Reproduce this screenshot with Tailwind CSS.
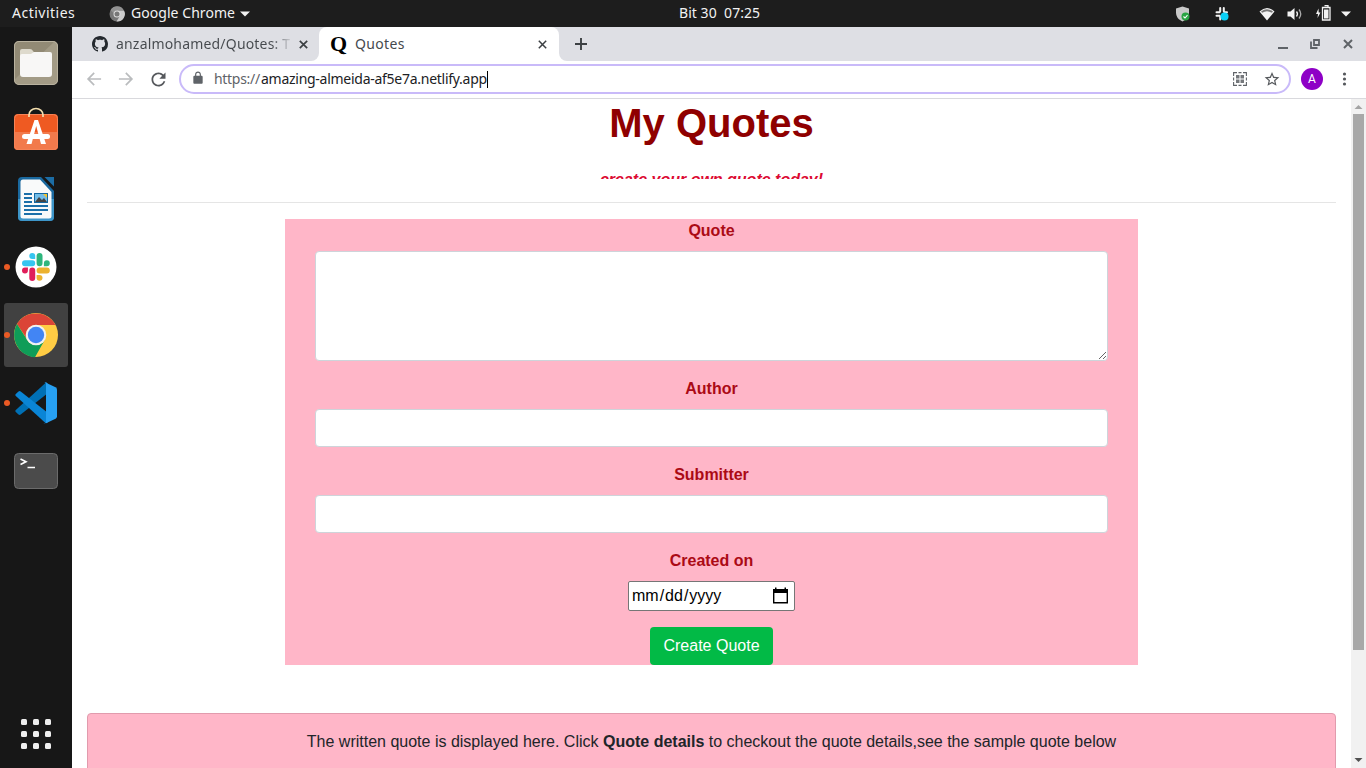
<!DOCTYPE html>
<html lang="en">
<head>
<meta charset="utf-8">
<title>Quotes</title>
<script src="https://cdn.jsdelivr.net/npm/@tailwindcss/browser@4"></script>
</head>
<body class="w-[1366px] h-[768px] overflow-hidden flex flex-col bg-[#171717] font-['Noto_Sans',sans-serif]">

<!-- Desktop top bar -->
<header class="h-[27px] shrink-0 bg-[#1d1d1d] text-[#f2f2f2] text-[14px] leading-[25px] flex items-center whitespace-nowrap">
  <div class="w-[109px] pl-3 pb-0.5 tracking-[0.5px]">Activities</div>
  <svg class="w-4 h-4 shrink-0" viewBox="0 0 16 16"><circle cx="8" cy="8" r="7.5" fill="#777"/><path d="M8 4.500H15a7.500 7.500 0 0 1-7.500 11L11 9.700z" fill="#ccc"/><path d="M1.500 4.300A7.500 7.500 0 0 1 15 4.500H8a3.500 3.500 0 0 0-3.400 2.500z" fill="#929292"/><circle cx="8" cy="8" r="3.500" fill="#ddd"/><circle cx="8" cy="8" r="2.500" fill="#777"/></svg>
  <div class="w-[109px] pl-1.5 pb-0.5 tracking-[0.05px]">Google Chrome</div>
  <svg class="w-[10px] h-[6px] ml-[6px]" viewBox="0 0 10 6"><path d="M0 0.500h10L5 5.500z" fill="#f2f2f2"/></svg>
  <div class="ml-[429px] w-[82px] pb-0.5 whitespace-pre tracking-[0.05px]">Bit 30  07:25</div>
  <div class="ml-auto flex items-center h-full pr-[15px]">
    <svg class="w-4 h-4 mr-[23px]" viewBox="0 0 16 16"><path d="M7.500 0.500 1 2.500v4C1 11 4 14 7.500 15.500 11 14 14 11 14 6.500v-4z" fill="#c9c9c9"/><circle cx="10.500" cy="10.500" r="4" fill="#2aa443"/><path d="m8.500 10.500 1.500 1.500 2.500-2.800" fill="none" stroke="#fff" stroke-width="1.100"/></svg>
    <svg class="w-4 h-4 mr-[29px]" viewBox="0 0 16 16"><g stroke="#f2f2f2" stroke-width="2" stroke-linecap="round"><path d="M6.200 2v3.200M9.800 2v3.200M2.500 6.300h3.200M10.300 6.300H13M2.500 9.700h3.200M6.200 10.500v3"/></g><circle cx="10.500" cy="10.500" r="4" fill="#0ad0f7"/></svg>
    <svg class="w-4 h-[14px] mr-[12px]" viewBox="0 0 16 14"><path d="M8 13.500 0.500 4.500Q8-2.500 15.500 4.500z" fill="#f2f2f2"/><path d="M2 4.500Q8 0 14 4.500L12.800 5.800Q8 2.500 3.200 5.800z" fill="#777"/></svg>
    <svg class="w-4 h-[14px] mr-[12px]" viewBox="0 0 16 14"><path d="M0.500 4.500h3L7.500 1v12L3.500 9.500h-3z" fill="#f2f2f2"/><path d="M9.500 4.500q2 2.500 0 5" stroke="#f2f2f2" stroke-width="1.300" fill="none"/><path d="M12 2.500q3.500 4.500 0 9" stroke="#aaa" stroke-width="1.300" fill="none"/></svg>
    <svg class="w-4 h-4 mr-[10px] -translate-y-px" viewBox="0 0 16 16"><path d="M3.500 3.500 1 9h2L2.500 13l3-5.500H3.700z" fill="#f2f2f2"/><path d="M7.500 2.500H15v12.500H7.500zM9.500 0.500H13v2" fill="none" stroke="#f2f2f2" stroke-width="1.300"/><path d="M9 4.500h4.500v9H9z" fill="#f2f2f2"/></svg>
    <svg class="w-[10px] h-[6px]" viewBox="0 0 10 6"><path d="M0 0.500h10L5 5.500z" fill="#f2f2f2"/></svg>
  </div>
</header>

<div class="flex flex-1 min-h-0">
  <!-- Dock -->
  <nav class="w-[72px] shrink-0 bg-[#171717] flex flex-col items-center pt-1 gap-1">
    <div class="w-16 h-16 grid place-items-center">
      <svg class="w-[46px] h-[46px]" viewBox="0 0 46 46"><rect x="1" y="1" width="44" height="44" rx="5" fill="#a39b86"/><path d="M1 40V6a5 5 0 0 1 5-5h36z" fill="#928a75"/><rect x="1.500" y="1.500" width="43" height="43" rx="4.500" fill="none" stroke="#b9b29f"/><path d="M7 14v-3q0-2 2-2h8q2 0 3 2l1.500 2H30v6H7z" fill="#dedacd"/><path d="M7 16q0-2 2-2h9l3-2h16q2 0 2 2v20q0 3-3 3H10q-3 0-3-3z" fill="#f8f7f6"/></svg>
    </div>
    <div class="w-16 h-16 grid place-items-center pb-1">
      <svg class="w-[46px] h-[46px]" viewBox="0 0 46 46"><rect x="1" y="8" width="44" height="36" rx="4" fill="#ef5a22"/><path d="M1 26h44v14a4 4 0 0 1-4 4H5a4 4 0 0 1-4-4z" fill="#f27a4c"/><rect x="1.500" y="8.500" width="43" height="35" rx="4" fill="none" stroke="#f68357"/><path d="M16 11V9a7 6.500 0 0 1 14 0v2" stroke="#f5dfae" stroke-width="1.700" fill="none"/><path d="M13.500 38 21.500 14h3.500L33 38h-5L23.200 20 18.500 38z" fill="#fff"/><rect x="9" y="28" width="28" height="5" rx="2.500" fill="#fff"/></svg>
    </div>
    <div class="w-16 h-16 grid place-items-center">
      <svg class="w-[38px] h-[46px]" viewBox="0 0 38 46"><path d="M5 1h19l13 14v26q0 4-4 4H5q-4 0-4-4V5q0-4 4-4z" fill="#1a699f"/><path d="M1 23h36v18q0 4-4 4H5q-4 0-4-4z" fill="#3d95c8"/><path d="M6 3.500h17L34.500 16v24q0 2.500-2.500 2.500H6q-2.500 0-2.500-2.500V6Q3.500 3.500 6 3.500z" fill="#f9fafa"/><path d="M27.500 1H37v9.500z" fill="#1c6da5"/><path d="M7 18h8M7 22h8M7 26h8M7 30h24M7 34h24M7 38h18" stroke="#1b6fa9" stroke-width="2"/><rect x="17" y="17" width="14" height="10" fill="#1467a0"/><rect x="18" y="18" width="12" height="8" fill="#73bde8"/><path d="M26 18h4v4z" fill="#f4c430"/><path d="m18 26 4-5 3 3 2-2 3 4z" fill="#444"/></svg>
    </div>
    <div class="w-16 h-16 grid place-items-center relative">
      <i class="absolute left-0 top-[29px] w-1.5 h-1.5 rounded-full bg-[#ea5a24]"></i>
      <svg class="w-[42px] h-[42px]" viewBox="0 0 42 42"><circle cx="21" cy="21" r="20.500" fill="#fff"/><g transform="translate(7 7) scale(.228)"><path d="M26 77a13 13 0 1 1-13-13h13zM32 77a13 13 0 0 1 26 0v33a13 13 0 0 1-26 0z" fill="#e01e5a"/><path d="M45 26a13 13 0 1 1 13-13v13zM45 32a13 13 0 0 1 0 26H13a13 13 0 0 1 0-26z" fill="#36c5f0"/><path d="M96 45a13 13 0 1 1 13 13H96zM90 45a13 13 0 0 1-26 0V13a13 13 0 0 1 26 0z" fill="#2eb67d"/><path d="M77 96a13 13 0 1 1-13 13V96zM77 90a13 13 0 0 1 0-26h32a13 13 0 0 1 0 26z" fill="#ecb22e"/></g></svg>
    </div>
    <div class="w-16 h-16 grid place-items-center relative bg-[#414141] rounded-[3px]">
      <i class="absolute left-0 top-[29px] w-1.5 h-1.5 rounded-full bg-[#ea5a24]"></i>
      <svg class="w-[46px] h-[46px]" viewBox="0 0 46 46"><circle cx="23" cy="23" r="22" fill="#fc4"/><path d="M4 12A22.300 22.300 0 0 1 42.500 13H23a10 10 0 0 0-9 14z" fill="#db4437"/><path d="M4 12A22.300 22.300 0 0 0 22 45.200L31.700 28A10 10 0 0 1 14.300 28z" fill="#0f9d58"/><circle cx="23" cy="23" r="10.300" fill="#f1f1f1"/><circle cx="23" cy="23" r="8.200" fill="#4285f4"/></svg>
    </div>
    <div class="w-16 h-16 grid place-items-center relative">
      <i class="absolute left-0 top-[29px] w-1.5 h-1.5 rounded-full bg-[#ea5a24]"></i>
      <svg class="w-[42px] h-[42px]" viewBox="0 0 42 42"><path d="M31 0.500 0.800 28q-1 1 0 2l2.700 2.600q1 .8 2.200 0L33 11z" fill="#0070b5"/><path d="M31 41.500 0.800 14q-1-1 0-2l2.700-2.600q1-.8 2.200 0L33 31z" fill="#0a85d6"/><path d="m31 41.300 9.500-4.500q1.500-.8 1.500-2.500V7.700q0-1.700-1.500-2.500L31 .7v40.600z" fill="#27a0f2"/><path d="M28.500 41Q31 42 31.500 39V3Q31 0 28.500 1L31 .3l1.500 1v39.500z" fill="#27a0f2"/></svg>
    </div>
    <div class="w-16 h-16 grid place-items-center">
      <svg class="w-11 h-9" viewBox="0 0 44 36"><rect x=".5" y=".5" width="43" height="35" rx="4" fill="#4b4b4b" stroke="#6b6b6b"/><path d="m6.500 6 5.500 2.700L6.500 11.500M13.500 14.500h7.500" fill="none" stroke="#fff" stroke-width="1.600"/></svg>
    </div>
    <div class="mt-auto mb-[19px] grid grid-cols-3 gap-1.5">
      <i class="w-1.5 h-1.5 rounded-[1.500px] bg-[#eee]"></i><i class="w-1.5 h-1.5 rounded-[1.500px] bg-[#eee]"></i><i class="w-1.5 h-1.5 rounded-[1.500px] bg-[#eee]"></i>
      <i class="w-1.5 h-1.5 rounded-[1.500px] bg-[#eee]"></i><i class="w-1.5 h-1.5 rounded-[1.500px] bg-[#eee]"></i><i class="w-1.5 h-1.5 rounded-[1.500px] bg-[#eee]"></i>
      <i class="w-1.5 h-1.5 rounded-[1.500px] bg-[#eee]"></i><i class="w-1.5 h-1.5 rounded-[1.500px] bg-[#eee]"></i><i class="w-1.5 h-1.5 rounded-[1.500px] bg-[#eee]"></i>
    </div>
  </nav>

  <!-- Browser window -->
  <section class="flex-1 min-w-0 flex flex-col bg-white">
    <!-- Tab strip -->
    <div class="h-[34px] shrink-0 bg-white flex text-[14px] text-[#45494d] whitespace-nowrap">
      <div class="w-[247px] bg-[#dedfe4] rounded-br-[8px] flex items-center pl-5">
        <svg class="w-4 h-4 shrink-0" viewBox="0 0 16 16"><path fill="#24292e" d="M8 0C3.580 0 0 3.580 0 8c0 3.540 2.290 6.530 5.470 7.590.4.070.55-.17.55-.38 0-.19-.01-.82-.01-1.490-2.010.37-2.530-.49-2.690-.94-.09-.23-.48-.94-.82-1.130-.28-.15-.68-.52-.01-.53.63-.01 1.080.58 1.230.82.72 1.210 1.870.87 2.330.66.070-.52.28-.87.51-1.070-1.780-.2-3.640-.89-3.640-3.950 0-.87.31-1.590.82-2.150-.08-.2-.36-1.020.08-2.120 0 0 .67-.21 2.200.82.64-.18 1.320-.27 2-.27s1.360.09 2 .27c1.530-1.040 2.200-.82 2.200-.82.44 1.100.16 1.920.08 2.120.51.56.82 1.270.82 2.150 0 3.070-1.870 3.750-3.650 3.950.29.25.54.73.54 1.480 0 1.070-.01 1.930-.01 2.200 0 .21.15.46.55.38A8.010 8.010 0 0 0 16 8c0-4.420-3.580-8-8-8z"/></svg>
        <div class="w-[177px] ml-2 mb-0.5 overflow-hidden bg-linear-to-r from-[#45494d] from-88% to-[#45494d]/0 bg-clip-text text-transparent tracking-[0.18px]">anzalmohamed/Quotes: T</div>
        <svg class="w-[9px] h-[9px] ml-[6px]" viewBox="0 0 9 9"><path d="m.8.8 7.400 7.400M8.200.8.8 8.200" stroke="#3c4043" stroke-width="1.700"/></svg>
      </div>
      <div class="w-[240px] bg-[#dedfe4] flex">
        <div class="flex-1 flex items-center pl-[11px] bg-white rounded-t-[8px]">
          <span class="w-[17px] mb-px font-['Liberation_Serif',serif] font-bold text-[22px] leading-none text-black">Q</span>
          <span class="ml-2 mb-0.5 tracking-[0.35px]">Quotes</span>
          <svg class="w-[9px] h-[9px] ml-auto mr-[12px]" viewBox="0 0 9 9"><path d="m.8.8 7.400 7.400M8.200.8.8 8.200" stroke="#3c4043" stroke-width="1.500"/></svg>
        </div>
      </div>
      <div class="flex-1 bg-[#dedfe4] rounded-bl-[8px] flex items-center pl-4 pr-[13px]">
        <svg class="w-3 h-3" viewBox="0 0 12 12"><path d="M6 0v12M0 6h12" stroke="#3c4043" stroke-width="1.900"/></svg>
        <svg class="w-[10px] h-[10px] ml-auto mr-[22px]" viewBox="0 0 10 10"><path d="M0 9h10" stroke="#5f6368" stroke-width="2"/></svg>
        <svg class="w-[10px] h-[10px] mr-[23px]" viewBox="0 0 10 10"><path d="M4 1h5v5H4zM1 2.500V9h6.500" fill="none" stroke="#5f6368" stroke-width="1.800"/></svg>
        <svg class="w-[10px] h-[10px]" viewBox="0 0 10 10"><path d="m1 1 8 8M9 1 1 9" stroke="#5f6368" stroke-width="2"/></svg>
      </div>
    </div>

    <!-- Toolbar -->
    <div class="h-[38px] shrink-0 border-b border-[#d9d9dd] flex items-center pl-3 pr-3 pb-px">
      <svg class="w-5 h-5" viewBox="0 0 24 24"><path fill="#babcbe" d="M20.500 11H7.330l5.590-5.590L11.500 4l-8 8 8 8 1.410-1.410L7.330 13H20.500v-2z"/></svg>
      <svg class="w-5 h-5 ml-3" viewBox="0 0 24 24"><path fill="#babcbe" d="M3.500 13h13.170l-5.590 5.590L12.500 20l8-8-8-8-1.410 1.410L16.670 11H3.500z"/></svg>
      <svg class="w-[21px] h-[21px] ml-[12px]" viewBox="0 0 24 24"><path fill="#55585c" d="M17.650 6.350C16.200 4.900 14.210 4 12 4c-4.420 0-7.990 3.580-7.990 8s3.570 8 7.990 8c3.730 0 6.840-2.550 7.730-6h-2.080c-.82 2.330-3.040 4-5.650 4-3.310 0-6-2.690-6-6s2.690-6 6-6c1.660 0 3.140.69 4.220 1.780L13 11h7V4l-2.350 2.350z"/></svg>
      <div class="ml-[10px] w-[1112px] h-[30px] border-2 border-[#c9baf9] rounded-full flex items-center pl-[10px] pr-[9px] text-[14px] whitespace-nowrap">
        <svg class="w-[14px] h-[14px] -translate-y-px" viewBox="0 0 24 24"><path fill="#5f6368" d="M18 8h-1V6c0-2.760-2.240-5-5-5S7 3.240 7 6v2H6c-1.100 0-2 .9-2 2v10c0 1.100.9 2 2 2h12c1.100 0 2-.9 2-2V10c0-1.100-.9-2-2-2zM9 8V6c0-1.660 1.340-3 3-3s3 1.340 3 3v2z"/></svg>
        <span class="ml-[9px] mb-0.5 w-[47px] text-[#5f6368] tracking-[-0.3px]">https://</span><span class="mb-0.5 w-[226px] text-[#202124] tracking-[-0.27px]">amazing-almeida-af5e7a.netlify.app</span><i class="w-px h-[17px] bg-black"></i>
        <svg class="w-[14px] h-[14px] ml-auto mr-[17px]" viewBox="0 0 14 14"><path d="M.6 4V.6H4M10 .6h3.400V4M13.400 10v3.400H10M4 13.400H.6V10M5.500.6h3M5.500 13.400h3M.6 5.500v3M13.400 5.500v3" fill="none" stroke="#5f6368" stroke-width="1.100"/><path d="M3 3h3.500v3.500H3zM7.500 3H11v3.500H7.500zM3 7.500h3.500V11H3zM7.500 7.500H11V11H7.500z" fill="#75787c"/></svg>
        <svg class="w-4 h-4" viewBox="0 0 24 24"><path fill="#55585c" d="m22 9.240-7.190-.62L12 2 9.190 8.630 2 9.240l5.460 4.730L5.820 21 12 17.270 18.180 21l-1.630-7.030L22 9.240zM12 15.400l-3.760 2.270 1-4.280-3.320-2.880 4.380-.38L12 6.100l1.710 4.040 4.380.38-3.320 2.880 1 4.280L12 15.400z" transform="translate(-1.200 -.8) scale(1.100)"/></svg>
      </div>
      <div class="ml-[10px] w-[22px] h-[22px] rounded-full bg-[#8e00c6] text-white text-[12px] font-[Roboto,sans-serif] grid place-items-center leading-none">A</div>
      <svg class="w-4 h-4 ml-[13px]" viewBox="0 0 16 16"><g fill="#55585c"><circle cx="8.500" cy="3" r="1.600"/><circle cx="8.500" cy="8" r="1.600"/><circle cx="8.500" cy="13" r="1.600"/></g></svg>
    </div>

    <!-- Page -->
    <div class="flex-1 min-h-0 flex font-['Liberation_Sans',Arial,sans-serif] text-base text-center">
      <main class="w-[1279px] px-[15px] overflow-hidden flex flex-col">
        <h1 class="text-[40px] leading-[48px] font-bold text-[#8f0000] shrink-0">My Quotes</h1>
        <div class="mt-5 h-3 shrink-0 overflow-hidden leading-[26px] font-bold italic text-[#dc0a32]">create your own quote today!</div>
        <hr class="mt-[23px] border-0 h-px shrink-0 bg-[#e5e5e5]">
        <form class="mt-4 w-[853px] h-[446px] shrink-0 self-center bg-[#ffb6c8] px-[30px] flex flex-col items-center font-bold text-[#ab0a15] leading-6">
          <label>Quote</label>
          <textarea class="mt-2 w-full h-[110px] shrink-0 bg-white border border-[#ced4da] rounded-[4px] resize-y block"></textarea>
          <label class="mt-4">Author</label>
          <input class="mt-2 w-full h-[38px] bg-white border border-[#ced4da] rounded-[4px]">
          <label class="mt-4">Submitter</label>
          <input class="mt-2 w-full h-[38px] bg-white border border-[#ced4da] rounded-[4px]">
          <label class="mt-4">Created on</label>
          <div class="mt-2 w-[167px] h-[30px] bg-white border border-[#767676] rounded-[2px] flex items-center justify-between pl-[3px] pr-[5px] font-normal text-black">
            <span class="flex gap-px"><span>mm</span><span>/</span><span>dd</span><span>/</span><span>yyyy</span></span>
            <svg class="w-[17px] h-[17px] -translate-y-px" viewBox="0 0 17 17"><path d="M1.700 3.500h13.600v12.300H1.700z" fill="none" stroke="#000" stroke-width="1.400"/><path d="M1 2h15v4H1zM3 0.500h1.500V3H3zM12.500 0.500H14V3h-1.500z"/></svg>
          </div>
          <button type="button" class="mt-4 w-[123px] h-[38px] rounded-[4px] bg-[#02ba46] text-white font-normal">Create Quote</button>
        </form>
        <div class="mt-12 h-[120px] shrink-0 bg-[#ffb6c8] border border-[#e19bad] rounded-[4px] pt-4 leading-6 text-[#212529]">The written quote is displayed here. Click <b>Quote details</b> to checkout the quote details,see the sample quote below</div>
      </main>
      <div class="w-[15px] bg-[#f1f1f1] flex flex-col items-center">
        <svg class="w-[15px] h-[15px] shrink-0" viewBox="0 0 15 15"><path d="M3.500 10 7.500 6l4 4z" fill="#a3a3a3"/></svg>
        <i class="w-[11px] h-[536px] bg-[#a8a8a8]"></i>
        <svg class="w-[15px] h-[15px] mt-auto" viewBox="0 0 15 15"><path d="M3.500 5h8l-4 4z" fill="#505050"/></svg>
      </div>
    </div>
  </section>
</div>
</body>
</html>
